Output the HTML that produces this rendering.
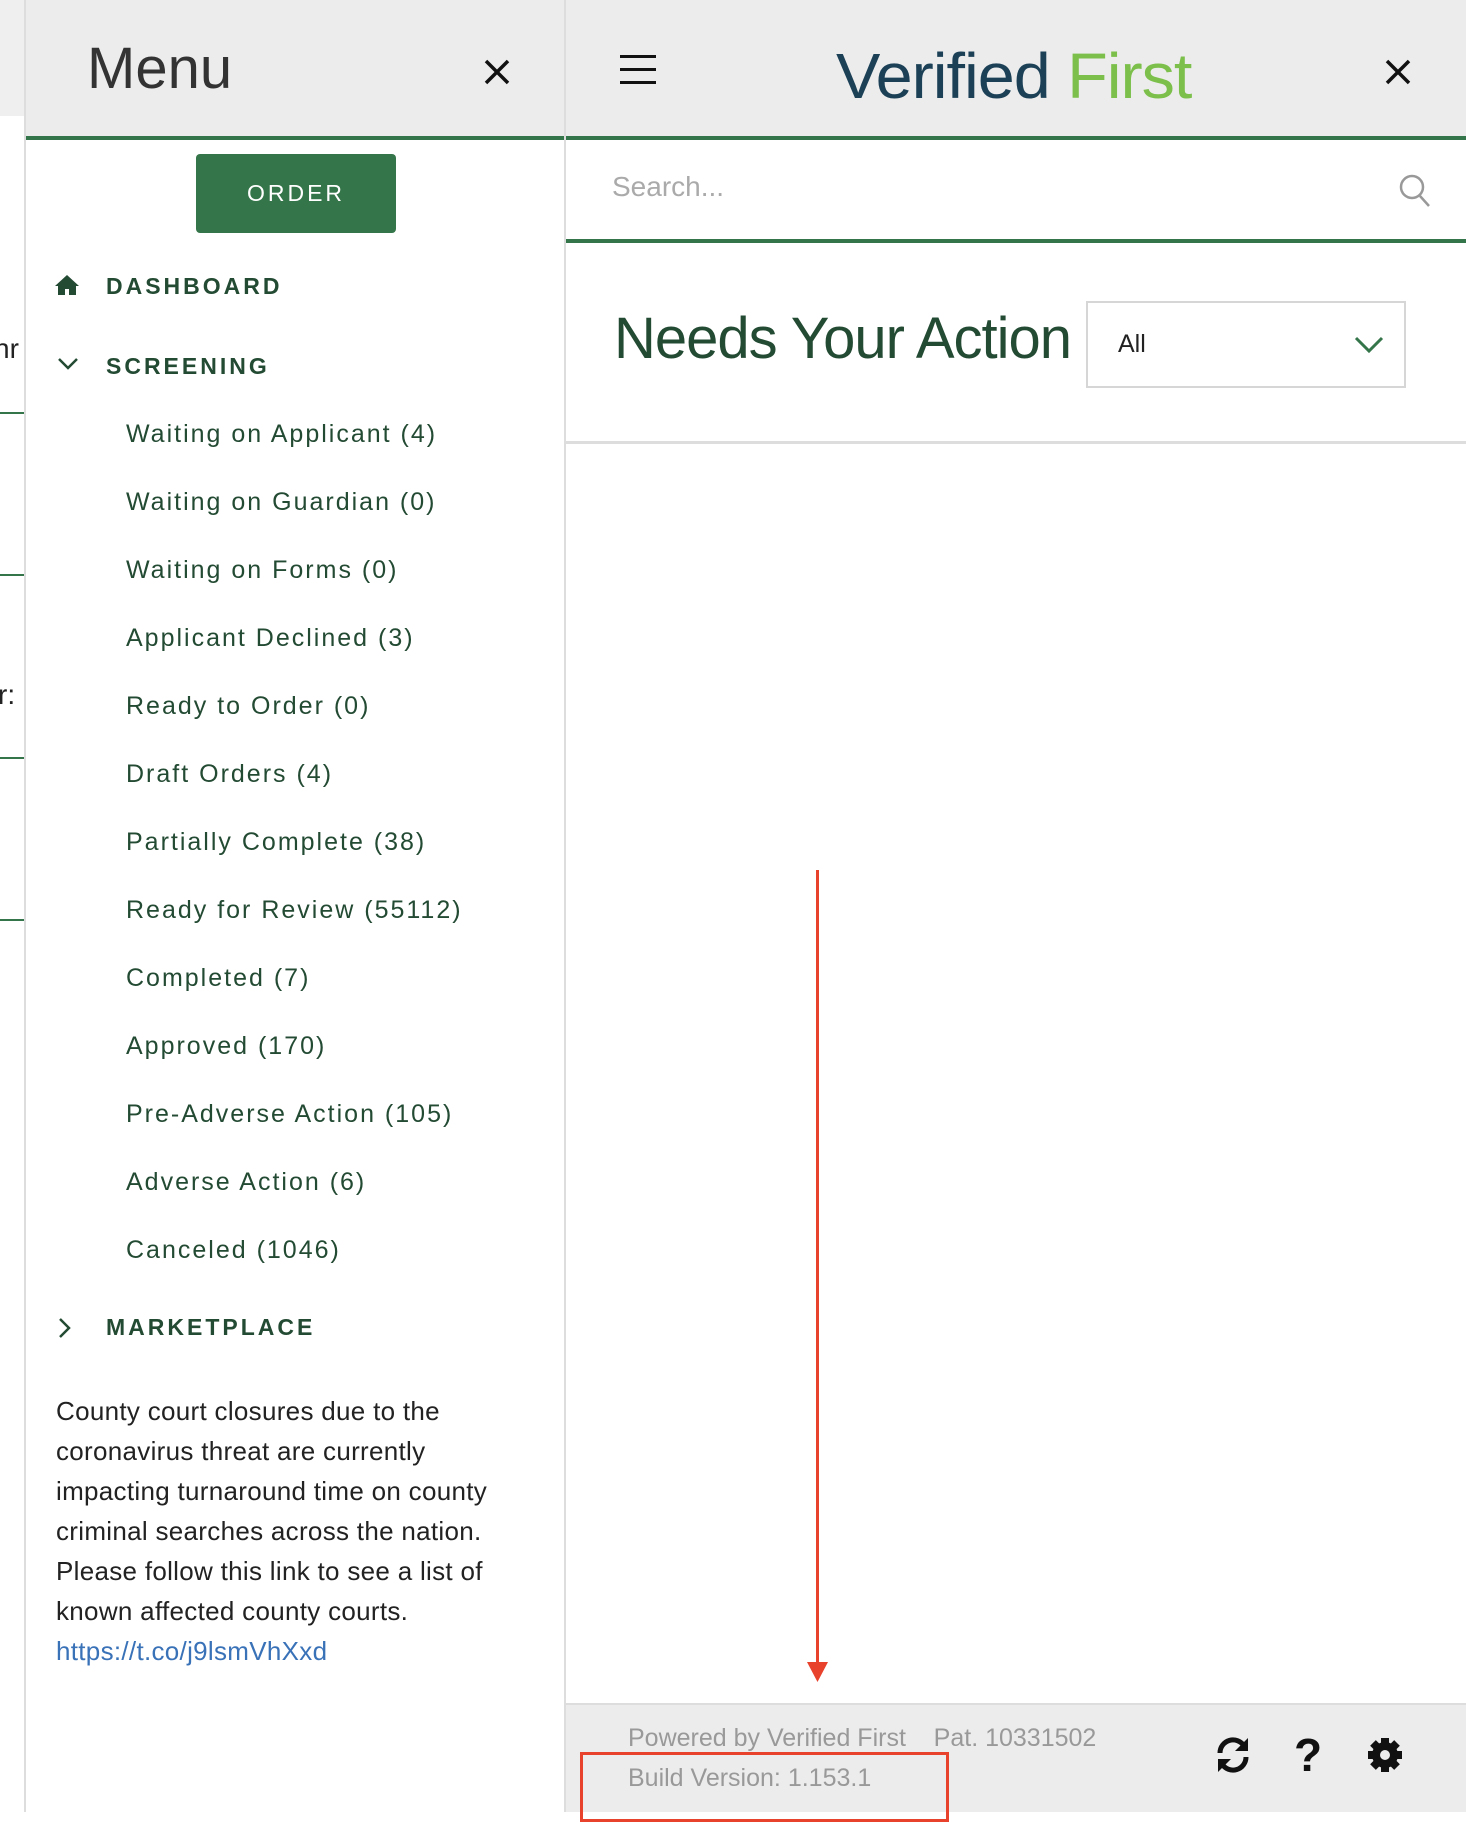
<!DOCTYPE html>
<html><head><meta charset="utf-8"><style>
*{margin:0;padding:0;box-sizing:border-box}
body{width:1466px;height:1812px;position:relative;overflow:hidden;background:#fff;font-family:"Liberation Sans",sans-serif}
.a{position:absolute;white-space:nowrap}
.item{position:absolute;left:126px;font-size:25px;color:#234a33;letter-spacing:2px;line-height:30px}
.sec{position:absolute;left:106px;font-size:23px;font-weight:bold;color:#234a33;letter-spacing:3px;line-height:30px}
</style></head><body>
<div class="a" style="left:0;top:0;width:25px;height:116px;background:#efefef"></div>
<div class="a" style="left:24px;top:0;width:2px;height:1812px;background:#ddd"></div>
<div class="a" style="left:0;top:412px;width:24px;height:2px;background:#347549"></div>
<div class="a" style="left:0;top:574px;width:24px;height:2px;background:#347549"></div>
<div class="a" style="left:0;top:757px;width:24px;height:2px;background:#347549"></div>
<div class="a" style="left:0;top:919px;width:24px;height:2px;background:#347549"></div>
<div class="a" style="left:-6px;top:333px;font-size:28px;color:#222">hr</div>
<div class="a" style="left:-2px;top:679px;font-size:28px;color:#222">r:</div>

<div class="a" style="left:26px;top:0;width:539px;height:136px;background:#ececec"></div>
<div class="a" style="left:26px;top:136px;width:539px;height:4px;background:#347549"></div>
<div class="a" style="left:87px;top:34px;font-size:58px;color:#333;line-height:70px">Menu</div>
<svg class="a" style="left:483px;top:58px" width="28" height="28" viewBox="0 0 28 28"><path d="M3 3L25 25M25 3L3 25" stroke="#111" stroke-width="3.5"/></svg>
<div class="a" style="left:196px;top:154px;width:200px;height:79px;background:#347549;border-radius:4px;color:#fff;font-size:23px;letter-spacing:3px;text-align:center;line-height:79px">ORDER</div>

<svg class="a" style="left:54px;top:274px" width="26" height="22" viewBox="0 0 26 22"><path d="M13 1L1 12h3v9h7v-6h4v6h7v-9h3z" fill="#234a33"/></svg>
<div class="sec" style="top:271px">DASHBOARD</div>
<svg class="a" style="left:57px;top:357px" width="22" height="14" viewBox="0 0 22 14"><path d="M2 2L11 11L20 2" stroke="#234a33" stroke-width="2.5" fill="none"/></svg>
<div class="sec" style="top:351px">SCREENING</div>

<div class="item" style="top:419px">Waiting on Applicant (4)</div>
<div class="item" style="top:487px">Waiting on Guardian (0)</div>
<div class="item" style="top:555px">Waiting on Forms (0)</div>
<div class="item" style="top:623px">Applicant Declined (3)</div>
<div class="item" style="top:691px">Ready to Order (0)</div>
<div class="item" style="top:759px">Draft Orders (4)</div>
<div class="item" style="top:827px">Partially Complete (38)</div>
<div class="item" style="top:895px">Ready for Review (55112)</div>
<div class="item" style="top:963px">Completed (7)</div>
<div class="item" style="top:1031px">Approved (170)</div>
<div class="item" style="top:1099px">Pre-Adverse Action (105)</div>
<div class="item" style="top:1167px">Adverse Action (6)</div>
<div class="item" style="top:1235px">Canceled (1046)</div>

<svg class="a" style="left:58px;top:1317px" width="14" height="22" viewBox="0 0 14 22"><path d="M2 2L11 11L2 20" stroke="#234a33" stroke-width="2.5" fill="none"/></svg>
<div class="sec" style="top:1312px">MARKETPLACE</div>

<div class="a" style="left:56px;top:1391px;font-size:26px;line-height:40px;color:#222;letter-spacing:0.3px">County court closures due to the<br>coronavirus threat are currently<br>impacting turnaround time on county<br>criminal searches across the nation.<br>Please follow this link to see a list of<br>known affected county courts.<br><span style="color:#3a72b8">https://t.co/j9lsmVhXxd</span></div>

<div class="a" style="left:564px;top:0;width:2px;height:1812px;background:#ddd"></div>
<div class="a" style="left:566px;top:0;width:900px;height:136px;background:#ececec"></div>
<div class="a" style="left:566px;top:136px;width:900px;height:4px;background:#347549"></div>
<div class="a" style="left:620px;top:55px;width:36px;height:3px;background:#111"></div>
<div class="a" style="left:620px;top:68px;width:36px;height:3px;background:#111"></div>
<div class="a" style="left:620px;top:81px;width:36px;height:3px;background:#111"></div>
<div class="a" style="left:836px;top:36px;font-size:64px;line-height:80px;letter-spacing:-1px;transform:scaleX(1.04);transform-origin:left"><span style="color:#1c4157">Verified</span> <span style="color:#7cc04b">First</span></div>
<svg class="a" style="left:1384px;top:58px" width="28" height="28" viewBox="0 0 28 28"><path d="M3 3L25 25M25 3L3 25" stroke="#111" stroke-width="3.5"/></svg>

<div class="a" style="left:612px;top:171px;font-size:28px;color:#aaa">Search...</div>
<svg class="a" style="left:1398px;top:173px" width="34" height="36" viewBox="0 0 34 36"><circle cx="14" cy="14" r="11" stroke="#999" stroke-width="2.5" fill="none"/><path d="M22 23L31 33" stroke="#999" stroke-width="2.5"/></svg>
<div class="a" style="left:566px;top:239px;width:900px;height:4px;background:#347549"></div>

<div class="a" style="left:614px;top:304px;font-size:58px;color:#234a33;line-height:70px;letter-spacing:-1px">Needs Your Action</div>
<div class="a" style="left:1086px;top:301px;width:320px;height:87px;border:2px solid #d6d6d6;background:#fff"></div>
<div class="a" style="left:1118px;top:330px;font-size:25px;color:#222">All</div>
<svg class="a" style="left:1354px;top:336px" width="30" height="18" viewBox="0 0 30 18"><path d="M2 2L15 15L28 2" stroke="#347549" stroke-width="3" fill="none"/></svg>
<div class="a" style="left:566px;top:441px;width:900px;height:3px;background:#ddd"></div>

<div class="a" style="left:816px;top:870px;width:3px;height:796px;background:#e8412c"></div>
<svg class="a" style="left:807px;top:1662px" width="21" height="21" viewBox="0 0 21 21"><path d="M0 0L21 0L10.5 20z" fill="#e8412c"/></svg>

<div class="a" style="left:566px;top:1703px;width:900px;height:109px;background:#ececec;border-top:2px solid #ddd"></div>
<div class="a" style="left:628px;top:1724px;font-size:25px;color:#999">Powered by Verified First &nbsp;&nbsp; Pat. 10331502</div>
<div class="a" style="left:628px;top:1764px;font-size:25px;color:#999">Build Version: 1.153.1</div>
<div class="a" style="left:580px;top:1752px;width:369px;height:70px;border:3px solid #e8412c"></div>
<svg class="a" style="left:1213px;top:1735px" width="40" height="40" viewBox="0 0 40 40"><path d="M7 18A13 13 0 0 1 31 11" stroke="#111" stroke-width="5" fill="none"/><path d="M35 3v13h-13z" fill="#111"/><path d="M33 22A13 13 0 0 1 9 29" stroke="#111" stroke-width="5" fill="none"/><path d="M5 37v-13h13z" fill="#111"/></svg>
<div class="a" style="left:1294px;top:1728px;font-size:46px;font-weight:bold;color:#111">?</div>
<svg class="a" style="left:1366px;top:1736px" width="38" height="38" viewBox="0 0 38 38"><g fill="#111"><circle cx="19" cy="19" r="13"/><rect x="15" y="2" width="8" height="34"/><rect x="2" y="15" width="34" height="8"/><rect x="15" y="2" width="8" height="34" transform="rotate(45 19 19)"/><rect x="15" y="2" width="8" height="34" transform="rotate(-45 19 19)"/></g><circle cx="19" cy="19" r="5" fill="#ececec"/></svg>
</body></html>
